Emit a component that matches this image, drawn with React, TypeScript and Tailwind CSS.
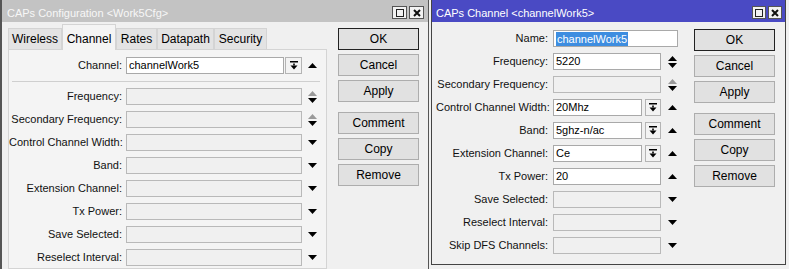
import React from "react";

type ArrowKind = "up" | "down" | "spin" | "spinDim" | "none";

const Up = ({ c = "#000" }: { c?: string }) => (
  <svg width="9" height="5" viewBox="0 0 9 5">
    <path d="M0 5 L4.5 0 L9 5Z" fill={c} />
  </svg>
);
const Down = ({ c = "#000" }: { c?: string }) => (
  <svg width="9" height="5" viewBox="0 0 9 5">
    <path d="M0 0 L9 0 L4.5 5Z" fill={c} />
  </svg>
);

const Arrow = ({ kind }: { kind: ArrowKind }) => {
  if (kind === "none") return null;
  if (kind === "up") return <Up />;
  if (kind === "down") return <Down />;
  return (
    <div className="flex flex-col items-center gap-[2px]">
      <Up c={kind === "spinDim" ? "#9a9a9a" : "#000"} />
      <Down />
    </div>
  );
};

const DropBtn = ({ w = "w-[17px]" }: { w?: string }) => (
  <div className={`${w} h-[17px] border border-[#b4b4b4] bg-[#f3f3f3] flex items-center justify-center`}>
    <svg width="8" height="9" viewBox="0 0 8 9">
      <rect x="0" y="0" width="8" height="1.5" fill="#000" />
      <rect x="3.2" y="2.5" width="1.6" height="2" fill="#000" />
      <path d="M0.5 4.5 L7.5 4.5 L4 8.5Z" fill="#000" />
    </svg>
  </div>
);

const Field = ({
  w,
  value,
  enabled,
  selected,
}: {
  w: string;
  value?: string;
  enabled?: boolean;
  selected?: boolean;
}) => (
  <div
    className={`${w} h-[17px] border flex items-center pl-[2px] text-[11px] leading-[15px] text-black whitespace-nowrap overflow-hidden ${
      enabled ? "bg-white border-[#a9a9a9]" : "bg-[#f0f0f0] border-[#b9b9b9]"
    }`}
  >
    {selected ? <span className="bg-[#3d8de0] text-white px-[1px] leading-[14px]">{value}</span> : value}
  </div>
);

const TitleButtons = ({ w }: { w: string }) => (
  <div className="flex gap-[2px]">
    <div className={`${w} h-[13px] border border-[#555] bg-[#f2f2f2] flex items-center justify-center`}>
      <div className="w-[8px] h-[8px] border border-[#222]" />
    </div>
    <div className={`${w} h-[13px] border border-[#555] bg-[#f2f2f2] flex items-center justify-center`}>
      <svg width="8" height="8" viewBox="0 0 8 8">
        <path d="M1 1 L7 7 M7 1 L1 7" stroke="#111" strokeWidth="2" />
      </svg>
    </div>
  </div>
);

const Btn = ({ label, def, extra = "" }: { label: string; def?: boolean; extra?: string }) => (
  <div
    className={`w-[81px] h-[22px] flex items-center justify-center text-[12px] text-black bg-[#e1e1e1] border ${
      def ? "border-[#222]" : "border-[#adadad]"
    } ${extra}`}
  >
    {label}
  </div>
);

const Buttons = () => (
  <div className="flex flex-col gap-[4px]">
    <Btn label="OK" def />
    <Btn label="Cancel" />
    <Btn label="Apply" />
    <Btn label="Comment" extra="mt-[6px]" />
    <Btn label="Copy" />
    <Btn label="Remove" />
  </div>
);

type RowProps = {
  label: string;
  labelW: string;
  children: React.ReactNode;
  arrow: ArrowKind;
  arrowW: string;
};

const Row = ({ label, labelW, children, arrow, arrowW }: RowProps) => (
  <div className="flex items-center h-[17px]">
    <div className={`${labelW} text-right text-[11px] text-[#111] whitespace-nowrap pr-[1px]`}>{label}</div>
    <div className="w-[3px]" />
    {children}
    {arrow !== "none" && <div className={`${arrowW} flex justify-center`}><Arrow kind={arrow} /></div>}
  </div>
);

const leftRows: { label: string; arrow: ArrowKind }[] = [
  { label: "Frequency:", arrow: "spinDim" },
  { label: "Secondary Frequency:", arrow: "spinDim" },
  { label: "Control Channel Width:", arrow: "down" },
  { label: "Band:", arrow: "down" },
  { label: "Extension Channel:", arrow: "down" },
  { label: "Tx Power:", arrow: "down" },
  { label: "Save Selected:", arrow: "down" },
  { label: "Reselect Interval:", arrow: "down" },
];

const tabs = ["Wireless", "Channel", "Rates", "Datapath", "Security"];
const tabW = ["w-[54px]", "w-[54px]", "w-[41px]", "w-[57px]", "w-[53px]"];

export default function App() {
  return (
    <div className="w-[789px] h-[269px] overflow-hidden bg-[#f0f0f0] flex [font-family:'Liberation_Sans',Arial,sans-serif]">
      {/* Left window */}
      <div className="w-[429px] h-[269px] flex flex-col border-l-2 border-r border-[#555] shrink-0">
        <div className="h-[22px] bg-[#c3c3c3] flex items-start justify-between pt-[6px] pl-[5px] pr-[4px]">
          <span className="text-[11px] leading-[14px] text-[#f7f7f7] whitespace-nowrap">CAPs Configuration &lt;Work5Cfg&gt;</span>
          <TitleButtons w="w-[15px]" />
        </div>
        <div className="flex flex-1">
          <div className="ml-[6px] w-[319px] flex flex-col pt-[2px]">
            <div className="flex items-end h-[25px]">
              {tabs.map((t, i) =>
                t === "Channel" ? (
                  <div
                    key={t}
                    className={`${tabW[i]} h-[26px] -mb-px relative bg-[#f4f4f4] border border-b-0 border-[#d4d4d4] flex items-start justify-center pt-[5px] text-[12px] text-black`}
                  >
                    {t}
                  </div>
                ) : (
                  <div
                    key={t}
                    className={`${tabW[i]} h-[21px] bg-[#e3e3e3] border border-b-0 border-[#d4d4d4] flex items-center justify-center text-[12px] text-black`}
                  >
                    {t}
                  </div>
                )
              )}
            </div>
            <div className="flex-1 border border-[#d4d4d4] bg-[#f4f4f4] pt-[7px]">
              <Row label="Channel:" labelW="w-[114px]" arrow="up" arrowW="w-[20px]">
                <Field w="w-[158px]" value="channelWork5" enabled />
                <div className="w-[1px]" />
                <DropBtn />
              </Row>
              <div className="ml-[3px] w-[308px] h-px bg-[#cfcfcf] mt-[7px]" />
              <div className="flex flex-col gap-[6px] mt-[6px]">
                {leftRows.map((r) => (
                  <Row key={r.label} label={r.label} labelW="w-[114px]" arrow={r.arrow} arrowW="w-[20px]">
                    <Field w="w-[176px]" />
                  </Row>
                ))}
              </div>
            </div>
          </div>
          <div className="ml-[11px] mt-[6px]">
            <Buttons />
          </div>
        </div>
      </div>

      <div className="w-[2px] shrink-0" />

      {/* Right window */}
      <div className="w-[355px] h-[265px] flex flex-col border-l border-r border-b border-[#444] shrink-0">
        <div className="h-[22px] bg-[#4a4ac4] flex items-start justify-between pt-[6px] pl-[4px] pr-[3px]">
          <span className="text-[11px] leading-[14px] text-white whitespace-nowrap">CAPs Channel &lt;channelWork5&gt;</span>
          <TitleButtons w="w-[14px]" />
        </div>
        <div className="flex flex-1">
          <div className="w-[251px] pt-[8px] pl-[4px] flex flex-col gap-[6px]">
            <Row label="Name:" labelW="w-[113px]" arrow="none" arrowW="w-[22px]">
              <div className="w-[1px]" />
              <Field w="w-[125px]" value="channelWork5" enabled selected />
            </Row>
            <Row label="Frequency:" labelW="w-[113px]" arrow="spin" arrowW="w-[22px]">
              <div className="w-[1px]" />
              <Field w="w-[108px]" value="5220" enabled />
            </Row>
            <Row label="Secondary Frequency:" labelW="w-[113px]" arrow="spinDim" arrowW="w-[22px]">
              <div className="w-[1px]" />
              <Field w="w-[108px]" />
            </Row>
            <Row label="Control Channel Width:" labelW="w-[113px]" arrow="up" arrowW="w-[22px]">
              <div className="w-[1px]" />
              <Field w="w-[89px]" value="20Mhz" enabled />
              <div className="w-[3px]" />
              <DropBtn w="w-[16px]" />
            </Row>
            <Row label="Band:" labelW="w-[113px]" arrow="up" arrowW="w-[22px]">
              <div className="w-[1px]" />
              <Field w="w-[89px]" value="5ghz-n/ac" enabled />
              <div className="w-[3px]" />
              <DropBtn w="w-[16px]" />
            </Row>
            <Row label="Extension Channel:" labelW="w-[113px]" arrow="up" arrowW="w-[22px]">
              <div className="w-[1px]" />
              <Field w="w-[89px]" value="Ce" enabled />
              <div className="w-[3px]" />
              <DropBtn w="w-[16px]" />
            </Row>
            <Row label="Tx Power:" labelW="w-[113px]" arrow="up" arrowW="w-[22px]">
              <div className="w-[1px]" />
              <Field w="w-[108px]" value="20" enabled />
            </Row>
            <Row label="Save Selected:" labelW="w-[113px]" arrow="down" arrowW="w-[22px]">
              <div className="w-[1px]" />
              <Field w="w-[108px]" />
            </Row>
            <Row label="Reselect Interval:" labelW="w-[113px]" arrow="down" arrowW="w-[22px]">
              <div className="w-[1px]" />
              <Field w="w-[108px]" />
            </Row>
            <Row label="Skip DFS Channels:" labelW="w-[113px]" arrow="down" arrowW="w-[22px]">
              <div className="w-[1px]" />
              <Field w="w-[108px]" />
            </Row>
          </div>
          <div className="ml-[11px] mt-[7px]">
            <Buttons />
          </div>
        </div>
      </div>
    </div>
  );
}
